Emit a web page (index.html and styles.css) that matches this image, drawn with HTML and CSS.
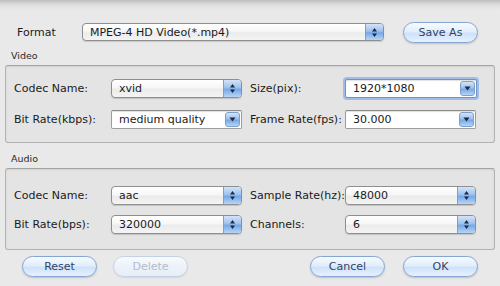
FILE: index.html
```html
<!DOCTYPE html>
<html lang="en">
<head>
    <meta charset="UTF-8">
    <title>Profile Settings</title>
    <link rel="stylesheet" href="styles.css">
</head>
<body>
    <div class="dialog">
        <div class="format-row">
            <span class="format-label">Format</span>
            <div class="popup popup-wide">
                <span class="value">MPEG-4 HD Video(*.mp4)</span>
                <span class="stepper"><svg width="7" height="11" viewBox="0 0 7 11"><path d="M3.5 1 L6 4.5 L1 4.5 Z M3.5 10 L6 6.5 L1 6.5 Z" fill="#1d2a44"/></svg></span>
            </div>
            <button class="aqua save-btn">Save As</button>
        </div>

        <div class="group-title">Video</div>
        <div class="group video-group">
            <div class="row">
                <span class="lbl">Codec Name:</span>
                <div class="popup">
                    <span class="value">xvid</span>
                    <span class="stepper"><svg width="7" height="11" viewBox="0 0 7 11"><path d="M3.5 1 L6 4.5 L1 4.5 Z M3.5 10 L6 6.5 L1 6.5 Z" fill="#1d2a44"/></svg></span>
                </div>
                <span class="lbl lbl-right">Size(pix):</span>
                <div class="combo focused">
                    <span class="value">1920*1080</span>
                    <span class="drop"><svg width="7" height="5" viewBox="0 0 7 5"><path d="M0.5 0.5 L6.5 0.5 L3.5 4.5 Z" fill="#1d2a44"/></svg></span>
                </div>
            </div>
            <div class="row">
                <span class="lbl">Bit Rate(kbps):</span>
                <div class="combo">
                    <span class="value">medium quality</span>
                    <span class="drop"><svg width="7" height="5" viewBox="0 0 7 5"><path d="M0.5 0.5 L6.5 0.5 L3.5 4.5 Z" fill="#1d2a44"/></svg></span>
                </div>
                <span class="lbl lbl-right">Frame Rate(fps):</span>
                <div class="combo">
                    <span class="value">30.000</span>
                    <span class="drop"><svg width="7" height="5" viewBox="0 0 7 5"><path d="M0.5 0.5 L6.5 0.5 L3.5 4.5 Z" fill="#1d2a44"/></svg></span>
                </div>
            </div>
        </div>

        <div class="group-title audio-title">Audio</div>
        <div class="group audio-group">
            <div class="row">
                <span class="lbl">Codec Name:</span>
                <div class="popup">
                    <span class="value">aac</span>
                    <span class="stepper"><svg width="7" height="11" viewBox="0 0 7 11"><path d="M3.5 1 L6 4.5 L1 4.5 Z M3.5 10 L6 6.5 L1 6.5 Z" fill="#1d2a44"/></svg></span>
                </div>
                <span class="lbl lbl-right">Sample Rate(hz):</span>
                <div class="popup">
                    <span class="value">48000</span>
                    <span class="stepper"><svg width="7" height="11" viewBox="0 0 7 11"><path d="M3.5 1 L6 4.5 L1 4.5 Z M3.5 10 L6 6.5 L1 6.5 Z" fill="#1d2a44"/></svg></span>
                </div>
            </div>
            <div class="row audio-row2">
                <span class="lbl">Bit Rate(bps):</span>
                <div class="popup">
                    <span class="value">320000</span>
                    <span class="stepper"><svg width="7" height="11" viewBox="0 0 7 11"><path d="M3.5 1 L6 4.5 L1 4.5 Z M3.5 10 L6 6.5 L1 6.5 Z" fill="#1d2a44"/></svg></span>
                </div>
                <span class="lbl lbl-right">Channels:</span>
                <div class="popup">
                    <span class="value">6</span>
                    <span class="stepper"><svg width="7" height="11" viewBox="0 0 7 11"><path d="M3.5 1 L6 4.5 L1 4.5 Z M3.5 10 L6 6.5 L1 6.5 Z" fill="#1d2a44"/></svg></span>
                </div>
            </div>
        </div>

        <div class="button-row">
            <button class="aqua">Reset</button>
            <button class="aqua disabled delete-btn">Delete</button>
            <button class="aqua cancel-btn">Cancel</button>
            <button class="aqua ok-btn">OK</button>
        </div>
    </div>
</body>
</html>
```

FILE: styles.css
```css
body {
    margin: 0;
    width: 500px;
    height: 286px;
    overflow: hidden;
    font-family: "DejaVu Sans", Verdana, sans-serif;
    font-size: 11px;
    color: #1a1a1a;
    background: linear-gradient(#bdbdbd, #e0e0e0 5px, #e9e9e9 10px, #e9e9e9);
}
.dialog {
    padding: 22px 5px 0 5px;
}
.format-row {
    display: flex;
    align-items: center;
    height: 20px;
    padding-left: 12px;
}
.format-label {
    width: 65px;
}
.popup {
    display: flex;
    align-items: center;
    width: 131px;
    height: 19px;
    box-sizing: border-box;
    border: 1px solid #8f8f8f;
    border-radius: 4px;
    background: linear-gradient(#ffffff, #f7f7f7 45%, #ebebeb 55%, #f4f4f4);
    box-shadow: 0 1px 1px rgba(0, 0, 0, 0.15);
    overflow: hidden;
}
.popup-wide {
    width: 302px;
    height: 18px;
}
.value {
    flex: 1;
    padding-left: 7px;
    white-space: nowrap;
}
.stepper {
    display: flex;
    align-items: center;
    justify-content: center;
    width: 17px;
    height: 100%;
    border-left: 1px solid #7f9fcb;
    background: linear-gradient(#d4e4f8, #9cc1ee 45%, #75a8e6 55%, #b7d5f6);
}
.combo {
    display: flex;
    align-items: center;
    width: 131px;
    height: 19px;
    box-sizing: border-box;
    border: 1px solid #9d9d9d;
    border-top-color: #8a8a8a;
    border-radius: 2px;
    background: #ffffff;
    box-shadow: inset 0 1px 1px rgba(0, 0, 0, 0.12);
    padding-right: 1px;
}
.combo.focused {
    width: 132px;
    border-color: #6e92c4;
    box-shadow: 0 0 0 2px #9ebee8, inset 0 1px 1px rgba(0, 0, 0, 0.12);
}
.drop {
    display: flex;
    align-items: center;
    justify-content: center;
    width: 15px;
    height: 15px;
    border-radius: 3px;
    border: 1px solid #7f9fcb;
    box-sizing: border-box;
    background: linear-gradient(#d4e4f8, #9cc1ee 45%, #75a8e6 55%, #b7d5f6);
}
.aqua {
    width: 75px;
    height: 21px;
    box-sizing: border-box;
    border: 1px solid #86a6d2;
    border-radius: 11px;
    font-family: "DejaVu Sans", Verdana, sans-serif;
    font-size: 11px;
    color: #2f4266;
    background: linear-gradient(#f6faff, #e2eefc 45%, #cfe2fa 55%, #e6f1fd);
    box-shadow: 0 1px 2px rgba(0, 0, 0, 0.18);
    padding: 0;
}
.save-btn {
    margin-left: 19px;
}
.aqua.disabled {
    color: #b0bdd0;
    border-color: #c4d1e3;
    background: linear-gradient(#f8fafd, #edf2f8 50%, #e7eef7);
    box-shadow: 0 1px 1px rgba(0, 0, 0, 0.08);
}
.group-title {
    margin-top: 8px;
    padding-left: 6px;
    height: 12px;
    line-height: 12px;
    font-size: 9.5px;
    color: #2a2a2a;
    margin-bottom: 3px;
}
.audio-title {
    margin-top: 10px;
}
.group {
    height: 78px;
    box-sizing: border-box;
    border: 1px solid #b3b3b3;
    border-top-color: #a3a3a3;
    border-radius: 3px;
    background: #e4e4e4;
    box-shadow: inset 0 1px 2px rgba(0, 0, 0, 0.08);
    padding: 13px 0 0 8px;
}
.audio-group {
    height: 82px;
    padding-top: 17px;
}
.row {
    display: flex;
    align-items: center;
    height: 19px;
    margin-bottom: 12px;
}
.audio-row2 {
    margin-top: -2px;
}
.lbl {
    width: 97px;
}
.lbl-right {
    width: 95px;
    margin-left: 8px;
}
.button-row {
    display: flex;
    margin-top: 6px;
    padding: 0 17px;
}
.delete-btn {
    margin-left: 16px;
}
.cancel-btn {
    margin-left: auto;
}
.ok-btn {
    margin-left: 18px;
}
```
